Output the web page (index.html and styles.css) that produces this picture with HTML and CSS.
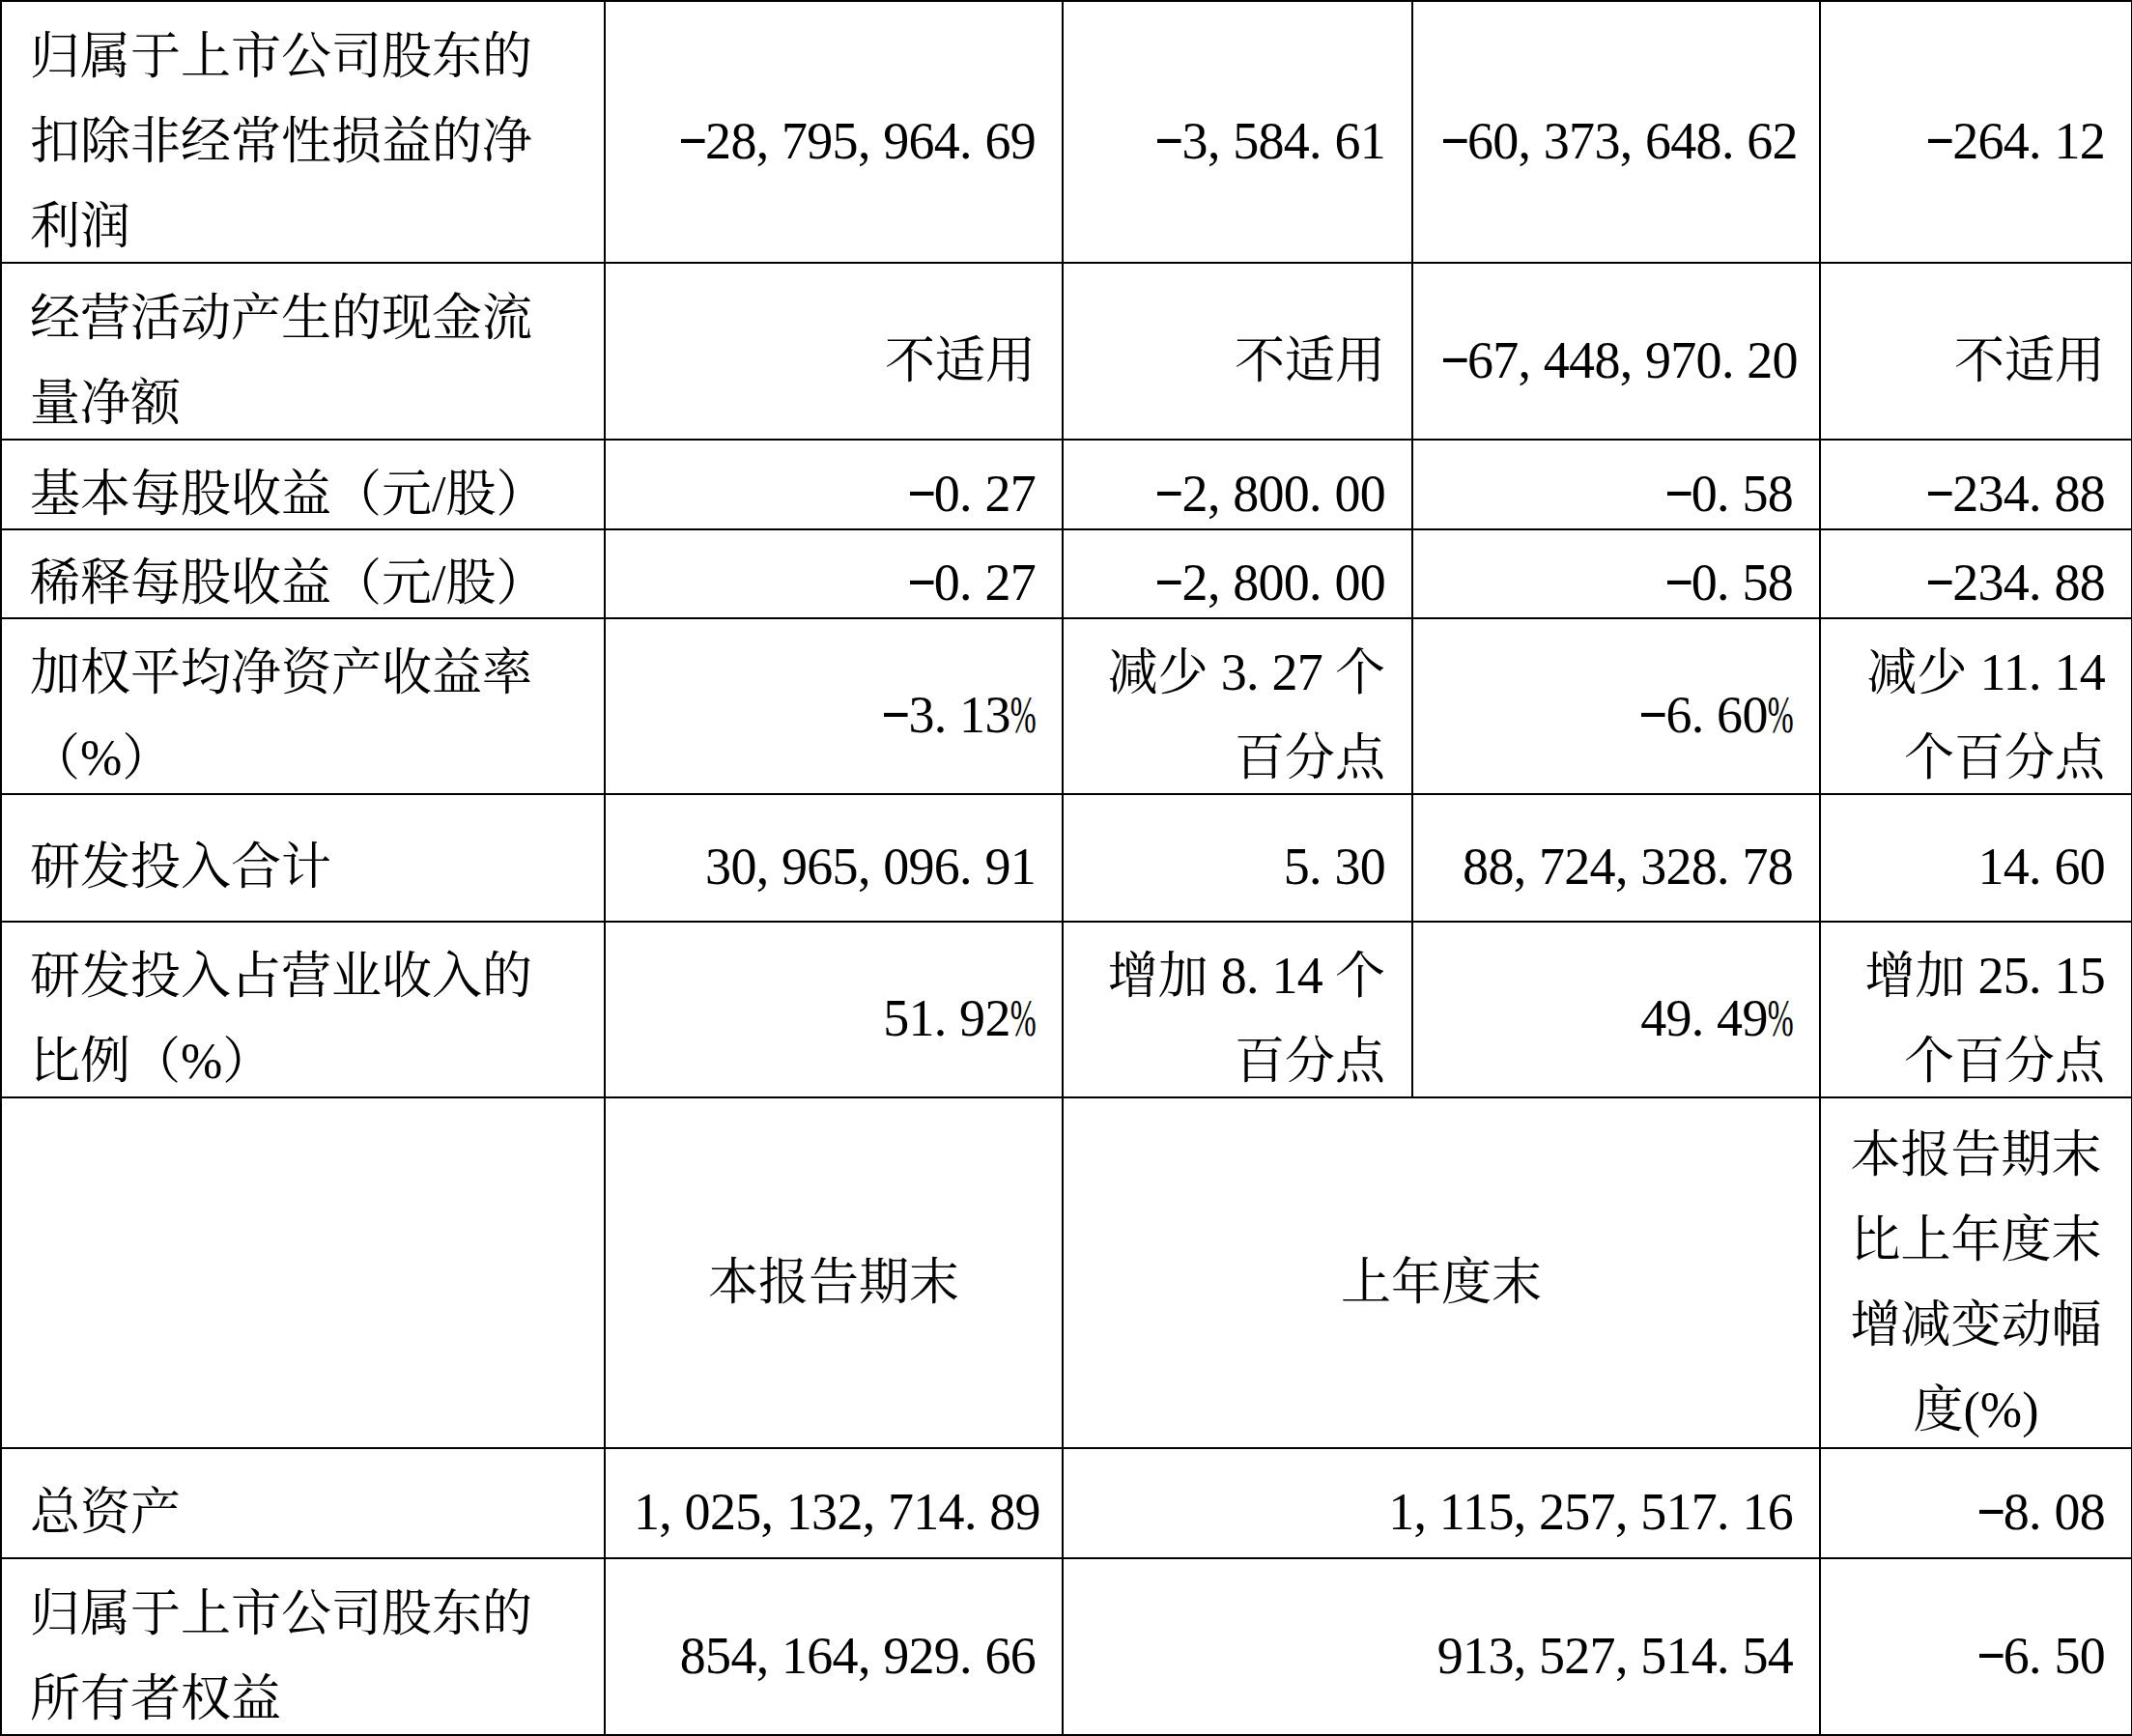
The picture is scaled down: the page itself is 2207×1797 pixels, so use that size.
FILE: index.html
```html
<!DOCTYPE html>
<html lang="zh-CN">
<head>
<meta charset="utf-8">
<title>主要财务数据</title>
<link rel="stylesheet" href="styles.css">
</head>
<body>
<table class="fin">
  <colgroup>
    <col class="c1"><col class="c2"><col class="c3"><col class="c4"><col class="c5">
  </colgroup>
  <tbody>
    <tr class="r1">
      <td class="lbl"><span class="t">归属于上市公司股东的扣除非经常性损益的净利润</span></td>
      <td class="num"><span class="t"><span class="n"><span class="m">-</span>28<span class="p">,</span>795<span class="p">,</span>964<span class="p">.</span>69</span></span></td>
      <td class="num"><span class="t"><span class="n"><span class="m">-</span>3<span class="p">,</span>584<span class="p">.</span>61</span></span></td>
      <td class="num"><span class="t"><span class="n"><span class="m">-</span>60<span class="p">,</span>373<span class="p">,</span>648<span class="p">.</span>62</span></span></td>
      <td class="num"><span class="t"><span class="n"><span class="m">-</span>264<span class="p">.</span>12</span></span></td>
    </tr>
    <tr class="r2">
      <td class="lbl"><span class="t">经营活动产生的现金流量净额</span></td>
      <td class="num"><span class="t">不适用</span></td>
      <td class="num"><span class="t">不适用</span></td>
      <td class="num"><span class="t"><span class="n"><span class="m">-</span>67<span class="p">,</span>448<span class="p">,</span>970<span class="p">.</span>20</span></span></td>
      <td class="num"><span class="t">不适用</span></td>
    </tr>
    <tr class="r3">
      <td class="lbl"><span class="t">基本每股收益（元/股）</span></td>
      <td class="num"><span class="t"><span class="n"><span class="m">-</span>0<span class="p">.</span>27</span></span></td>
      <td class="num"><span class="t"><span class="n"><span class="m">-</span>2<span class="p">,</span>800<span class="p">.</span>00</span></span></td>
      <td class="num"><span class="t"><span class="n"><span class="m">-</span>0<span class="p">.</span>58</span></span></td>
      <td class="num"><span class="t"><span class="n"><span class="m">-</span>234<span class="p">.</span>88</span></span></td>
    </tr>
    <tr class="r4">
      <td class="lbl"><span class="t">稀释每股收益（元/股）</span></td>
      <td class="num"><span class="t"><span class="n"><span class="m">-</span>0<span class="p">.</span>27</span></span></td>
      <td class="num"><span class="t"><span class="n"><span class="m">-</span>2<span class="p">,</span>800<span class="p">.</span>00</span></span></td>
      <td class="num"><span class="t"><span class="n"><span class="m">-</span>0<span class="p">.</span>58</span></span></td>
      <td class="num"><span class="t"><span class="n"><span class="m">-</span>234<span class="p">.</span>88</span></span></td>
    </tr>
    <tr class="r5">
      <td class="lbl"><span class="t">加权平均净资产收益率（%）</span></td>
      <td class="num"><span class="t"><span class="n"><span class="m">-</span>3<span class="p">.</span>13<span class="pc">%</span></span></span></td>
      <td class="num"><span class="t">减少 <span class="n">3<span class="p">.</span>27</span> 个<br>百分点</span></td>
      <td class="num"><span class="t"><span class="n"><span class="m">-</span>6<span class="p">.</span>60<span class="pc">%</span></span></span></td>
      <td class="num"><span class="t">减少 <span class="n">11<span class="p">.</span>14</span><br>个百分点</span></td>
    </tr>
    <tr class="r6">
      <td class="lbl"><span class="t">研发投入合计</span></td>
      <td class="num"><span class="t"><span class="n">30<span class="p">,</span>965<span class="p">,</span>096<span class="p">.</span>91</span></span></td>
      <td class="num"><span class="t"><span class="n">5<span class="p">.</span>30</span></span></td>
      <td class="num"><span class="t"><span class="n">88<span class="p">,</span>724<span class="p">,</span>328<span class="p">.</span>78</span></span></td>
      <td class="num"><span class="t"><span class="n">14<span class="p">.</span>60</span></span></td>
    </tr>
    <tr class="r7">
      <td class="lbl"><span class="t">研发投入占营业收入的比例（%）</span></td>
      <td class="num"><span class="t"><span class="n">51<span class="p">.</span>92<span class="pc">%</span></span></span></td>
      <td class="num"><span class="t">增加 <span class="n">8<span class="p">.</span>14</span> 个<br>百分点</span></td>
      <td class="num"><span class="t"><span class="n">49<span class="p">.</span>49<span class="pc">%</span></span></span></td>
      <td class="num"><span class="t">增加 <span class="n">25<span class="p">.</span>15</span><br>个百分点</span></td>
    </tr>
    <tr class="r8">
      <td class="lbl"></td>
      <td class="ctr"><span class="t">本报告期末</span></td>
      <td class="ctr" colspan="2"><span class="t">上年度末</span></td>
      <td class="ctr"><span class="t">本报告期末比上年度末增减变动幅度(%)</span></td>
    </tr>
    <tr class="r9">
      <td class="lbl"><span class="t">总资产</span></td>
      <td class="num"><span class="t"><span class="n">1<span class="p">,</span>025<span class="p">,</span>132<span class="p">,</span>714<span class="p">.</span>89</span></span></td>
      <td class="num" colspan="2"><span class="t"><span class="n">1<span class="p">,</span>115<span class="p">,</span>257<span class="p">,</span>517<span class="p">.</span>16</span></span></td>
      <td class="num"><span class="t"><span class="n"><span class="m">-</span>8<span class="p">.</span>08</span></span></td>
    </tr>
    <tr class="r10">
      <td class="lbl"><span class="t">归属于上市公司股东的所有者权益</span></td>
      <td class="num"><span class="t"><span class="n">854<span class="p">,</span>164<span class="p">,</span>929<span class="p">.</span>66</span></span></td>
      <td class="num" colspan="2"><span class="t"><span class="n">913<span class="p">,</span>527<span class="p">,</span>514<span class="p">.</span>54</span></span></td>
      <td class="num"><span class="t"><span class="n"><span class="m">-</span>6<span class="p">.</span>50</span></span></td>
    </tr>
  </tbody>
</table>
</body>
</html>
```

FILE: styles.css
```css
html, body {
  margin: 0;
  padding: 0;
  background: #ffffff;
}

body {
  width: 2207px;
  height: 1797px;
  overflow: hidden;
  color: #000000;
  font-family: "Liberation Serif", "Noto Serif CJK SC", "Noto Sans CJK SC", serif;
  font-size: 52px;
  line-height: 88px;
}

.fin {
  border-collapse: collapse;
  table-layout: fixed;
  width: 2206px;
}

.c1 { width: 625px; }
.c2 { width: 474px; }
.c3 { width: 362px; }
.c4 { width: 422px; }
.c5 { width: 323px; }

.fin td {
  border: 2px solid #000000;
  padding: 0 27px 0 29px;
  vertical-align: middle;
  overflow: hidden;
}

.r1 { height: 271px; }
.r2 { height: 183px; }
.r3 { height: 93px; }
.r4 { height: 92px; }
.r5 { height: 182px; }
.r6 { height: 132px; }
.r7 { height: 182px; }
.r8 { height: 363px; }
.r9 { height: 114px; }
.r10 { height: 183px; }

.lbl { text-align: left; }
.num { text-align: right; }
.fin td.ctr { text-align: center; padding: 0 26px; }

/* glyphs sit lower in their 88px line boxes, like the source document */
.t {
  line-height: 48px;
  vertical-align: -10px;
}

.n {
  font-size: 54px;
  letter-spacing: -0.7px;
  white-space: nowrap;
}

.p {
  display: inline-block;
  width: 26.3px;
  text-align: left;
}

.m {
  display: inline-block;
  line-height: 20px;
  vertical-align: 5px;
  transform: scaleX(1.75);
  margin: 0 4.8px;
}

.pc {
  display: inline-block;
  transform: scaleX(0.6);
  margin: 0 -9px;
}
```
